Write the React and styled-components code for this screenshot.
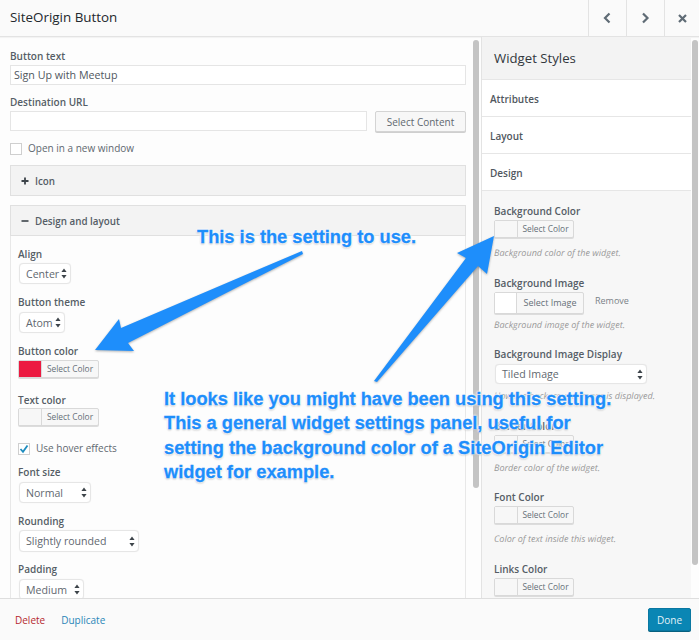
import React from 'react'
import styled, { createGlobalStyle } from 'styled-components'

const Global = createGlobalStyle`
html, body { margin: 0; padding: 0; background: #fff; }
* { box-sizing: border-box; }
`

const Dialog = styled.div`
position: relative;
width: 699px;
height: 640px;
overflow: hidden;
display: flex;
flex-direction: column;
background: #fdfdfd;
font-family: "Open Sans", "Liberation Sans", sans-serif;
color: #32373c;
`

const Header = styled.header`
flex: 0 0 37px;
display: flex;
align-items: stretch;
background: #fafafa;
border-bottom: 1px solid #e3e3e3;
box-shadow: 0 1px 1px rgba(0,0,0,.04);
`
const Title = styled.h1`
flex: 1;
margin: 0;
padding: 0 0 1px 10px;
font-size: 13.4px;
font-weight: 400;
line-height: 35px;
color: #23282d;
`
const NavButton = styled.button`
width: 38px;
padding: 0;
display: flex;
align-items: center;
justify-content: center;
background: none;
border: 0;
border-left: 1px solid #e3e3e3;
color: #5f6b75;
&:last-child { width: 35px; }
`

const Body = styled.div`
flex: 1;
min-height: 0;
display: flex;
`
const Main = styled.div`
width: 472px;
padding: 12px 6px 0 10px;
overflow: hidden;
`
const Track = styled.div`
flex: 0 0 ${({ $w }) => $w}px;
padding-top: 3px;
margin-left: ${({ $ml }) => $ml}px;
`
const Thumb = styled.div`
width: 100%;
height: ${({ $h }) => $h}px;
background: #c4c4c4;
border-radius: 3px;
`
const Side = styled.aside`
width: 210px;
margin-left: 2px;
border-left: 1px solid #e3e3e3;
background: #f7f7f7;
overflow: hidden;
`
const SideTitle = styled.h2`
margin: 0;
height: 43px;
padding-left: 12px;
font-size: 13.2px;
font-weight: 400;
line-height: 42px;
color: #32373c;
background: #f3f3f3;
border-bottom: 1px solid #e6e6e6;
`
const SideTab = styled.div`
height: 37px;
padding: 1px 0 0 8px;
font-size: 10px;
font-weight: 600;
line-height: 36px;
color: #50575e;
background: #fff;
border-bottom: 1px solid #e6e6e6;
`
const SideBody = styled.div`
padding: 13px 0 0 12px;
`

const Field = styled.div`
margin-bottom: ${({ $mb }) => $mb}px;
`
const Label = styled.div`
height: 14px;
margin-bottom: ${({ $gap = 2 }) => $gap}px;
font-size: 10px;
font-weight: 600;
line-height: 14px;
color: #555d66;
`
const TextInput = styled.div`
height: 20px;
padding-left: 3px;
font-size: 10.7px;
line-height: 19px;
color: #50575e;
background: #fff;
border: 1px solid #e5e5e5;
width: ${({ $w }) => ($w ? `${$w}px` : '100%')};
`
const UrlRow = styled.div`
display: flex;
gap: 8px;
`
const ContentButton = styled.button`
width: 91px;
height: 21px;
padding: 0;
font: 400 10px "Open Sans", sans-serif;
color: #5f6870;
background: #f7f7f7;
border: 1px solid #d4d4d4;
border-radius: 2px;
box-shadow: 0 1px 0 #cfcfcf;
`
const CheckRow = styled.label`
display: flex;
align-items: flex-start;
gap: 6px;
height: 12px;
font-size: 10px;
line-height: 10px;
color: #5f6870;
margin-bottom: ${({ $mb }) => $mb}px;
`
const CheckBox = styled.span`
flex: 0 0 12px;
height: 12px;
display: flex;
align-items: center;
justify-content: center;
background: #fff;
border: 1px solid #cfcfcf;
`
const Section = styled.div`
height: 31px;
display: flex;
align-items: center;
gap: 6px;
padding: 1px 0 0 10px;
font-size: 9.8px;
font-weight: 600;
color: #555d66;
background: #f3f3f3;
border: 1px solid #e0e0e0;
margin-bottom: ${({ $mb = 0 }) => $mb}px;
`
const SectionBody = styled.div`
padding: 11px 0 0 7px;
border-left: 1px solid #e8e8e8;
border-right: 1px solid #e8e8e8;
height: 400px;
`
const SelectBox = styled.div`
width: ${({ $w }) => $w}px;
height: ${({ $h = 21 }) => $h}px;
margin-left: 1px;
padding: 0 3px 0 6px;
display: flex;
align-items: center;
justify-content: space-between;
font-size: 10.6px;
color: #5f6870;
background: #fff;
border: 1px solid #e6e6e6;
border-radius: 4px;
box-shadow: 0 0 1px rgba(0,0,0,.08);
`
const ColorPicker = styled.div`
display: flex;
width: ${({ $w = 80 }) => $w}px;
height: ${({ $h = 18 }) => $h}px;
background: #f7f7f7;
border: 1px solid #d9d9d9;
border-radius: 2px;
box-shadow: 0 1px 0 #dcdcdc;
`
const Swatch = styled.span`
flex: 0 0 ${({ $w = 23 }) => $w}px;
background: ${({ $color = '#f7f7f7' }) => $color};
border-right: 1px solid #d9d9d9;
`
const PickerText = styled.span`
flex: 1;
text-align: center;
font-size: ${({ $size = 8.4 }) => $size}px;
line-height: ${({ $lh = 16 }) => $lh}px;
color: #666f77;
`
const ImageRow = styled.div`
display: flex;
align-items: flex-start;
gap: 11px;
font-size: 9px;
line-height: 18px;
color: #7a8288;
`
const Hint = styled.div`
height: 14px;
margin-top: ${({ $mt = 8 }) => $mt}px;
font-size: 9.05px;
font-style: italic;
line-height: 14px;
white-space: nowrap;
text-rendering: geometricPrecision;
color: #9a9a9a;
`

const Footer = styled.footer`
flex: 0 0 42px;
display: flex;
align-items: center;
padding: 0 8px 0 15px;
background: #fafafa;
border-top: 1px solid #dedede;
font-size: 10px;
`
const FooterLink = styled.a`
color: ${({ $color }) => $color};
margin-right: 16px;
`
const DoneButton = styled.button`
margin-left: auto;
width: 43px;
height: 23px;
padding: 0;
font: 400 10px "Open Sans", sans-serif;
color: #e4f2f8;
background: #0a86b4;
border: 1px solid #0a78a2;
border-radius: 2px;
box-shadow: 0 1px 0 #06607f;
`

const Arrows = styled.svg`
position: absolute;
inset: 0;
pointer-events: none;
filter: drop-shadow(0 1px 1px rgba(0,0,0,.3));
`
const Note = styled.div`
position: absolute;
left: ${({ $x }) => $x}px;
top: ${({ $y }) => $y}px;
font-family: "Liberation Sans", Arial, sans-serif;
font-size: 18.25px;
font-weight: 700;
line-height: 24.4px;
white-space: pre;
color: #1e8efb;
-webkit-text-stroke: 0.3px #1e8efb;
text-shadow: 0 0 1px #fff, 0 0 2px #fff, 0 0 2px #fff, 0 0 3px #fff, 0 0 3px #fff, 0 1px 2px rgba(0,0,0,.45);
`

function Updown() {
  return (
    <svg width="6" height="11" viewBox="0 0 6 11">
      <path d="M3 0.5 L5.6 4 L0.4 4 Z M3 10.5 L5.6 7 L0.4 7 Z" fill="#3d444a" />
    </svg>
  )
}

function Select({ value, w, h }) {
  return (
    <SelectBox $w={w} $h={h}>
      {value}
      <Updown />
    </SelectBox>
  )
}

function Picker({ color, w }) {
  return (
    <ColorPicker $w={w}>
      <Swatch $color={color} />
      <PickerText>Select Color</PickerText>
    </ColorPicker>
  )
}

function Chevron({ dir }) {
  const d = dir === 'left' ? 'M6.5 1.5 L2 6 L6.5 10.5' : 'M2 1.5 L6.5 6 L2 10.5'
  return (
    <svg width="9" height="12" viewBox="0 0 9 12">
      <path d={d} fill="none" stroke="currentColor" strokeWidth="2.2" />
    </svg>
  )
}

export default function App() {
  return (
    <Dialog>
      <Global />
      <Header>
        <Title>SiteOrigin Button</Title>
        <NavButton><Chevron dir="left" /></NavButton>
        <NavButton><Chevron dir="right" /></NavButton>
        <NavButton>
          <svg width="9" height="9" viewBox="0 0 9 9">
            <path d="M1 1 L8 8 M8 1 L1 8" stroke="currentColor" strokeWidth="2.2" />
          </svg>
        </NavButton>
      </Header>

      <Body>
        <Main>
          <Field $mb={10}>
            <Label>Button text</Label>
            <TextInput>Sign Up with Meetup</TextInput>
          </Field>
          <Field $mb={11}>
            <Label>Destination URL</Label>
            <UrlRow>
              <TextInput $w={357} />
              <ContentButton>Select Content</ContentButton>
            </UrlRow>
          </Field>
          <CheckRow $mb={10}>
            <CheckBox />
            Open in a new window
          </CheckRow>
          <Section $mb={9}>
            <svg width="8" height="8" viewBox="0 0 8 8">
              <path d="M4 0.5 V7.5 M0.5 4 H7.5" stroke="#3d444a" strokeWidth="1.8" />
            </svg>
            Icon
          </Section>
          <Section>
            <svg width="8" height="8" viewBox="0 0 8 8">
              <path d="M0.5 4 H7.5" stroke="#3d444a" strokeWidth="1.6" />
            </svg>
            Design and layout
          </Section>
          <SectionBody>
            <Field $mb={11}>
              <Label>Align</Label>
              <Select value="Center" w={52} />
            </Field>
            <Field $mb={11}>
              <Label $gap={3}>Button theme</Label>
              <Select value="Atom" w={46} />
            </Field>
            <Field $mb={15}>
              <Label>Button color</Label>
              <Picker color="#ec1a41" w={81} />
            </Field>
            <Field $mb={17}>
              <Label $gap={1}>Text color</Label>
              <Picker w={81} />
            </Field>
            <CheckRow $mb={10}>
              <CheckBox>
                <svg width="10" height="10" viewBox="0 0 10 10">
                  <path d="M1.5 5 L4 7.8 L8.5 1.5" fill="none" stroke="#1e8cbe" strokeWidth="1.8" />
                </svg>
              </CheckBox>
              Use hover effects
            </CheckRow>
            <Field $mb={11}>
              <Label $gap={3}>Font size</Label>
              <Select value="Normal" w={72} />
            </Field>
            <Field $mb={10}>
              <Label>Rounding</Label>
              <Select value="Slightly rounded" w={120} h={22} />
            </Field>
            <Field $mb={0}>
              <Label $gap={3}>Padding</Label>
              <Select value="Medium" w={65} />
            </Field>
          </SectionBody>
        </Main>
        <Track $w={6} $ml={1}><Thumb $h={448} /></Track>

        <Side>
          <SideTitle>Widget Styles</SideTitle>
          <SideTab>Attributes</SideTab>
          <SideTab>Layout</SideTab>
          <SideTab>Design</SideTab>
          <SideBody>
            <Field $mb={16}>
              <Label>Background Color</Label>
              <Picker />
              <Hint>Background color of the widget.</Hint>
            </Field>
            <Field $mb={15}>
              <Label>Background Image</Label>
              <ImageRow>
                <ColorPicker $w={90} $h={22}>
                  <Swatch $color="#fff" $w={22} />
                  <PickerText $size={9} $lh={20}>Select Image</PickerText>
                </ColorPicker>
                Remove
              </ImageRow>
              <Hint $mt={4}>Background image of the widget.</Hint>
            </Field>
            <Field $mb={16}>
              <Label $gap={3}>Background Image Display</Label>
              <Select value="Tiled Image" w={152} h={20} />
              <Hint $mt={5}>How the background image is displayed.</Hint>
            </Field>
            <Field $mb={15}>
              <Label>Border Color</Label>
              <Picker />
              <Hint>Border color of the widget.</Hint>
            </Field>
            <Field $mb={16}>
              <Label>Font Color</Label>
              <Picker />
              <Hint>Color of text inside this widget.</Hint>
            </Field>
            <Field $mb={0}>
              <Label>Links Color</Label>
              <Picker />
            </Field>
          </SideBody>
        </Side>
        <Track $w={6} $ml={1}><Thumb $h={525} /></Track>
      </Body>

      <Footer>
        <FooterLink $color="#b5282e">Delete</FooterLink>
        <FooterLink $color="#2a86b8">Duplicate</FooterLink>
        <DoneButton>Done</DoneButton>
      </Footer>

      <Arrows width="699" height="640" viewBox="0 0 699 640">
        <path d="M302 251 L121 328 L119 319 L95 350 L134 351 L128 343 L303 254 Z" fill="#1e8efb" />
        <path d="M374 381 L466 258 L457 253 L494 236 L487 274 L478 266 L377 382 Z" fill="#1e8efb" />
      </Arrows>
      <Note $x={197} $y={225}>This is the setting to use.</Note>
      <Note $x={164} $y={387}>{`It looks like you might have been using this setting.
This a general widget settings panel, useful for
setting the background color of a SiteOrigin Editor
widget for example.`}</Note>
    </Dialog>
  )
}
